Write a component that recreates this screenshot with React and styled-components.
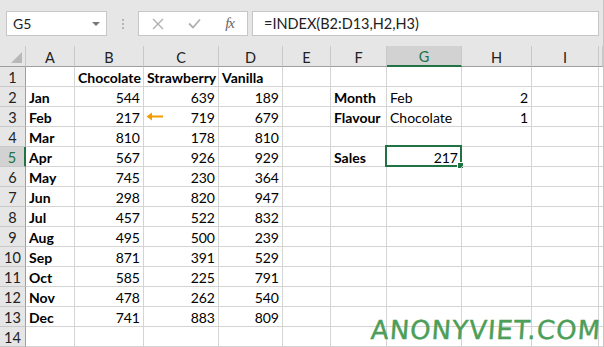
import styled, { createGlobalStyle } from "styled-components";

const GlobalStyle = createGlobalStyle`
  html, body {
    margin: 0;
    padding: 0;
    background: #ffffff;
    overflow: hidden;
  }
`;

const cols = ["A", "B", "C", "D", "E", "F", "G", "H", "I", "J"];
// corner + A..I, then a sliver of J
const widths = [26, 49, 69, 75, 64, 48, 56, 75, 70, 67, 4];

const data = [
  ["", "Chocolate", "Strawberry", "Vanilla"],
  ["Jan", 544, 639, 189],
  ["Feb", 217, 719, 679],
  ["Mar", 810, 178, 810],
  ["Apr", 567, 926, 929],
  ["May", 745, 230, 364],
  ["Jun", 298, 820, 947],
  ["Jul", 457, 522, 832],
  ["Aug", 495, 500, 239],
  ["Sep", 871, 391, 529],
  ["Oct", 585, 225, 791],
  ["Nov", 478, 262, 540],
  ["Dec", 741, 883, 809],
  ["", "", "", ""],
];

// lookup table at F..H
const side = {
  2: [{ v: "Month", bold: true }, { v: "Feb" }, { v: 2, num: true }],
  3: [{ v: "Flavour", bold: true }, { v: "Chocolate" }, { v: 1, num: true }],
  5: [{ v: "Sales", bold: true }, { v: 217, num: true }, { v: "" }],
};

const Page = styled.div`
  width: 604px;
  height: 347px;
  position: relative;
  overflow: hidden;
  font-family: Lato, "Liberation Sans", sans-serif;
  background: #ffffff;
  border-right: 1px solid #c6c6c6;
  box-sizing: border-box;
`;

const FormulaBar = styled.div`
  height: 46px;
  background: #e6e6e6;
  display: flex;
  align-items: flex-start;
  padding: 11px 0 0 6px;
  box-sizing: border-box;
`;

const NameBox = styled.div`
  width: 101px;
  height: 25px;
  box-sizing: border-box;
  background: #fff;
  border: 1px solid #c6c6c6;
  display: flex;
  align-items: center;
  justify-content: space-between;
  padding: 0 6px 0 6px;
  font-size: 14px;
  color: #222;
`;

const Caret = styled.span`
  width: 0;
  height: 0;
  border-left: 4px solid transparent;
  border-right: 4px solid transparent;
  border-top: 4px solid #777;
`;

const Grip = styled.div`
  width: 31px;
  height: 25px;
  display: flex;
  flex-direction: column;
  align-items: center;
  justify-content: center;
  gap: 2px;
  span {
    width: 2px;
    height: 2px;
    background: #b4b4b4;
  }
`;

const FxBox = styled.div`
  width: 110px;
  height: 25px;
  box-sizing: border-box;
  background: #fff;
  border: 1px solid #c6c6c6;
  display: flex;
  align-items: center;
  justify-content: space-between;
  padding: 0 13px 0 13px;
`;

const Fx = styled.span`
  font-family: "Liberation Serif", serif;
  font-style: italic;
  font-size: 15px;
  color: #666;
  letter-spacing: -1px;
`;

const Formula = styled.div`
  margin-left: 4px;
  width: 347px;
  height: 25px;
  box-sizing: border-box;
  background: #fff;
  border: 1px solid #c6c6c6;
  display: flex;
  align-items: center;
  padding-left: 11px;
  font-size: 14.5px;
  color: #222;
`;

const Grid = styled.div`
  display: grid;
  grid-template-columns: ${widths.map((w) => w + "px").join(" ")};
  grid-template-rows: 21px;
  grid-auto-rows: 20px;
`;

const ColHead = styled.div`
  background: ${(p) => (p.$sel ? "#d2d2d2" : "#e6e6e6")};
  color: ${(p) => (p.$sel ? "#217346" : "#222")};
  border-right: 1px solid #c8c8c8;
  border-bottom: ${(p) => (p.$sel ? "2px solid #217346" : "1px solid #9e9e9e")};
  box-sizing: border-box;
  display: flex;
  align-items: center;
  justify-content: center;
  font-size: 14.5px;
  padding-top: 2px;
`;

const Corner = styled(ColHead)`
  position: relative;
  &::after {
    content: "";
    position: absolute;
    right: 3px;
    bottom: 3px;
    border-left: 11px solid transparent;
    border-bottom: 11px solid #b8b8b8;
  }
`;

const RowHead = styled.div`
  background: ${(p) => (p.$sel ? "#d2d2d2" : "#e6e6e6")};
  color: ${(p) => (p.$sel ? "#217346" : "#222")};
  border-right: ${(p) => (p.$sel ? "2px solid #217346" : "1px solid #9e9e9e")};
  border-bottom: 1px solid #c8c8c8;
  box-sizing: border-box;
  display: flex;
  align-items: center;
  justify-content: center;
  padding-top: 2px;
  font-size: 14.5px;
`;

const Cell = styled.div`
  position: relative;
  border-right: 1px solid #d4d4d4;
  border-bottom: 1px solid #d4d4d4;
  box-sizing: border-box;
  display: flex;
  align-items: center;
  justify-content: ${(p) => (p.$num ? "flex-end" : "flex-start")};
  padding: 2px 3px 0 3px;
  font-size: 14px;
  font-weight: ${(p) => (p.$bold ? 700 : 400)};
  color: #000;
  white-space: nowrap;
  overflow: visible;
`;

const Selected = styled.div`
  position: absolute;
  left: -2px;
  top: -2px;
  right: -1px;
  bottom: -1px;
  border: 2px solid #217346;
  pointer-events: none;
  &::after {
    content: "";
    position: absolute;
    right: -4px;
    bottom: -4px;
    width: 5px;
    height: 5px;
    background: #217346;
    border: 1px solid #fff;
  }
`;

const Arrow = styled.svg`
  position: absolute;
  left: 146px;
  top: 112px;
`;

const Watermark = styled.div`
  position: absolute;
  right: 2px;
  bottom: 2px;
  font-family: "DejaVu Sans", sans-serif;
  font-size: 26px;
  color: #4c9e58;
  letter-spacing: 1px;
  -webkit-text-stroke: 0.4px #4c9e58;
  transform: skewX(-4deg);
`;

function XIcon() {
  return (
    <svg width="12" height="12" viewBox="0 0 12 12">
      <path d="M1 1 L11 11 M11 1 L1 11" stroke="#b0b0b0" strokeWidth="1.4" fill="none" />
    </svg>
  );
}

function CheckIcon() {
  return (
    <svg width="13" height="11" viewBox="0 0 13 11">
      <path d="M1 5.5 L5 9.5 L12 1.5" stroke="#b0b0b0" strokeWidth="1.8" fill="none" />
    </svg>
  );
}

function bodyCell(r, c) {
  // r: 1..14, c: index into cols
  const key = `${cols[c]}${r}`;
  if (c <= 3) {
    const v = data[r - 1][c];
    const bold = c === 0 || r === 1;
    const num = typeof v === "number";
    return (
      <Cell key={key} $bold={bold} $num={num}>
        {v}
      </Cell>
    );
  }
  if (c >= 5 && c <= 7 && side[r]) {
    const item = side[r][c - 5];
    return (
      <Cell key={key} $bold={item.bold} $num={item.num}>
        {item.v}
        {key === "G5" && <Selected />}
      </Cell>
    );
  }
  return <Cell key={key} />;
}

export default function App() {
  const rows = Array.from({ length: 14 }, (_, i) => i + 1);
  return (
    <Page>
      <GlobalStyle />
      <FormulaBar>
        <NameBox>
          G5
          <Caret />
        </NameBox>
        <Grip>
          <span />
          <span />
          <span />
        </Grip>
        <FxBox>
          <XIcon />
          <CheckIcon />
          <Fx>fx</Fx>
        </FxBox>
        <Formula>=INDEX(B2:D13,H2,H3)</Formula>
      </FormulaBar>
      <Grid>
        <Corner />
        {cols.map((c) => (
          <ColHead key={c} $sel={c === "G"}>
            {c === "J" ? "" : c}
          </ColHead>
        ))}
        {rows.map((r) => [
          <RowHead key={"h" + r} $sel={r === 5}>
            {r}
          </RowHead>,
          ...cols.map((_, ci) => bodyCell(r, ci)),
        ])}
      </Grid>
      <Arrow width="18" height="9" viewBox="0 0 18 9">
        <path d="M17 4.5 H3" stroke="#f59b00" strokeWidth="2" />
        <path d="M0.5 4.5 L6 0.5 L6 8.5 Z" fill="#f59b00" />
      </Arrow>
      <Watermark>ANONYVIET.COM</Watermark>
    </Page>
  );
}
